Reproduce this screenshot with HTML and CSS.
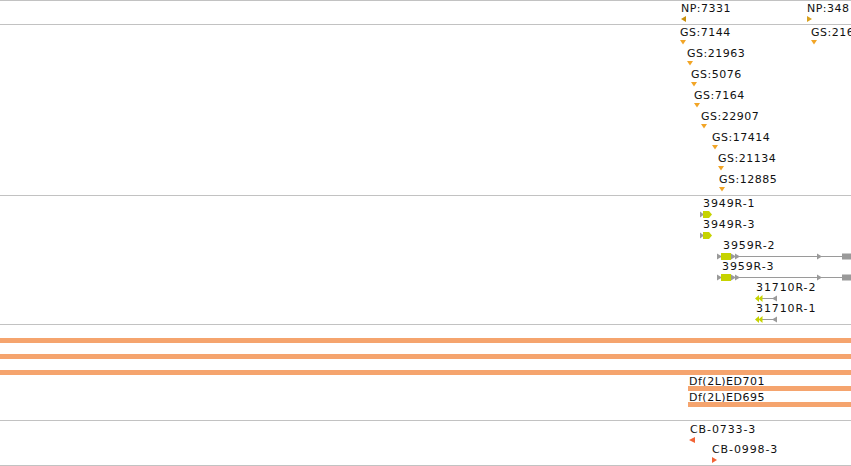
FILE: index.html
```html
<html lang="en">
  <head>
    <meta name="viewport" content="width=device-width, initial-scale=1" />
    <title>Tracks</title>
    <link rel="stylesheet" href="styles.css">
  </head>
  <body>
    <div class="panel">
      <!-- protein track -->
      <div class="track track-np">
        <div class="feat" style="left:681px;top:1px">
          <span class="lbl">NP:7331</span>
          <svg class="glyph" width="6" height="6"><polygon points="5,0 5,6 0,3" class="np-l" /></svg>
        </div>
        <div class="feat" style="left:807px;top:1px">
          <span class="lbl">NP:348</span>
          <svg class="glyph" width="6" height="6"><polygon points="0,0 0,6 5,3" class="np-r" /></svg>
        </div>
      </div>

      <!-- GS insertions -->
      <div class="track track-gs">
        <div class="feat" style="left:680px;top:1px">
          <span class="lbl">GS:7144</span>
          <svg class="glyph" width="6" height="5"><polygon points="0,0 6,0 3,4.5" class="gs" /></svg>
        </div>
        <div class="feat" style="left:687px;top:22px">
          <span class="lbl">GS:21963</span>
          <svg class="glyph" width="6" height="5"><polygon points="0,0 6,0 3,4.5" class="gs" /></svg>
        </div>
        <div class="feat" style="left:691px;top:43px">
          <span class="lbl">GS:5076</span>
          <svg class="glyph" width="6" height="5"><polygon points="0,0 6,0 3,4.5" class="gs" /></svg>
        </div>
        <div class="feat" style="left:694px;top:64px">
          <span class="lbl">GS:7164</span>
          <svg class="glyph" width="6" height="5"><polygon points="0,0 6,0 3,4.5" class="gs" /></svg>
        </div>
        <div class="feat" style="left:701px;top:85px">
          <span class="lbl">GS:22907</span>
          <svg class="glyph" width="6" height="5"><polygon points="0,0 6,0 3,4.5" class="gs" /></svg>
        </div>
        <div class="feat" style="left:712px;top:106px">
          <span class="lbl">GS:17414</span>
          <svg class="glyph" width="6" height="5"><polygon points="0,0 6,0 3,4.5" class="gs" /></svg>
        </div>
        <div class="feat" style="left:718px;top:127px">
          <span class="lbl">GS:21134</span>
          <svg class="glyph" width="6" height="5"><polygon points="0,0 6,0 3,4.5" class="gs" /></svg>
        </div>
        <div class="feat" style="left:719px;top:148px">
          <span class="lbl">GS:12885</span>
          <svg class="glyph" width="6" height="5"><polygon points="0,0 6,0 3,4.5" class="gs" /></svg>
        </div>
        <div class="feat" style="left:811px;top:1px">
          <span class="lbl">GS:21634</span>
          <svg class="glyph" width="6" height="5"><polygon points="0,0 6,0 3,4.5" class="gs" /></svg>
        </div>
      </div>

      <!-- gene models -->
      <div class="track track-genes">
        <div class="feat" style="left:700px;top:1px">
          <span class="lbl lbl-wide" style="margin-left:3px">3949R-1</span>
          <svg class="glyph" width="14" height="7">
            <polygon points="0,0.5 4,3.5 0,6.5" class="utr" />
            <polygon points="3,0 9,0 12,3.5 9,7 3,7" class="cds" />
          </svg>
        </div>
        <div class="feat" style="left:700px;top:22px">
          <span class="lbl lbl-wide" style="margin-left:3px">3949R-3</span>
          <svg class="glyph" width="14" height="7">
            <polygon points="0,0.5 4,3.5 0,6.5" class="utr" />
            <polygon points="3,0 9,0 12,3.5 9,7 3,7" class="cds" />
          </svg>
        </div>
        <div class="feat" style="left:717px;top:43px">
          <span class="lbl lbl-wide" style="margin-left:6px">3959R-2</span>
          <svg class="glyph" width="140" height="7">
            <line x1="22" y1="3.5" x2="130" y2="3.5" class="intron" />
            <polygon points="0,0.5 5,3.5 0,6.5" class="utr" />
            <rect x="4" y="0" width="10" height="7" class="cds" />
            <polygon points="14,0.5 19,3.5 14,6.5" class="utr" />
            <polygon points="18,0.5 23,3.5 18,6.5" class="utr" />
            <polygon points="100,0.5 105,3.5 100,6.5" class="utr" />
            <rect x="125" y="0.5" width="15" height="6" class="utr" />
          </svg>
        </div>
        <div class="feat" style="left:717px;top:64px">
          <span class="lbl lbl-wide" style="margin-left:5px">3959R-3</span>
          <svg class="glyph" width="140" height="7">
            <line x1="22" y1="3.5" x2="130" y2="3.5" class="intron" />
            <polygon points="0,0.5 5,3.5 0,6.5" class="utr" />
            <rect x="4" y="0" width="10" height="7" class="cds" />
            <polygon points="14,0.5 19,3.5 14,6.5" class="utr" />
            <polygon points="18,0.5 23,3.5 18,6.5" class="utr" />
            <polygon points="100,0.5 105,3.5 100,6.5" class="utr" />
            <rect x="125" y="0.5" width="15" height="6" class="utr" />
          </svg>
        </div>
        <div class="feat" style="left:755px;top:85px">
          <span class="lbl lbl-wide" style="margin-left:1px">31710R-2</span>
          <svg class="glyph" width="23" height="7">
            <line x1="6" y1="3.5" x2="18" y2="3.5" class="intron" />
            <polygon points="4,0 4,7 0,3.5" class="cds" />
            <polygon points="7.5,0 7.5,7 3.5,3.5" class="cds" />
            <polygon points="22,0.5 22,6.5 17,3.5" class="utr" />
          </svg>
        </div>
        <div class="feat" style="left:755px;top:106px">
          <span class="lbl lbl-wide" style="margin-left:1px">31710R-1</span>
          <svg class="glyph" width="23" height="7">
            <line x1="6" y1="3.5" x2="18" y2="3.5" class="intron" />
            <polygon points="4,0 4,7 0,3.5" class="cds" />
            <polygon points="7.5,0 7.5,7 3.5,3.5" class="cds" />
            <polygon points="22,0.5 22,6.5 17,3.5" class="utr" />
          </svg>
        </div>
      </div>

      <!-- deficiencies -->
      <div class="track track-df">
        <div class="span-bar" style="top:13px"></div>
        <div class="span-bar" style="top:29px"></div>
        <div class="span-bar" style="top:45px"></div>
        <div class="feat feat-wide" style="left:688px;top:50px">
          <span class="lbl" style="margin-left:1px">Df(2L)ED701</span>
          <div class="bar"></div>
        </div>
        <div class="feat feat-wide" style="left:688px;top:66px">
          <span class="lbl" style="margin-left:1px">Df(2L)ED695</span>
          <div class="bar"></div>
        </div>
      </div>

      <!-- CB insertions -->
      <div class="track track-cb">
        <div class="feat" style="left:689px;top:2px">
          <span class="lbl lbl-wide" style="margin-left:1px">CB-0733-3</span>
          <svg class="glyph" width="6" height="6"><polygon points="6,0 6,6 0,3" class="cb" /></svg>
        </div>
        <div class="feat" style="left:712px;top:22px">
          <span class="lbl lbl-wide">CB-0998-3</span>
          <svg class="glyph" width="6" height="6"><polygon points="0,0 0,6 5,3" class="cb" /></svg>
        </div>
      </div>
    </div>
  </body>
</html>
```

FILE: styles.css
```css
html,
body {
  margin: 0;
  padding: 0;
  background: #fff;
}
body {
  width: 851px;
  height: 466px;
  overflow: hidden;
  font-family: "DejaVu Sans", "Liberation Sans", sans-serif;
  font-size: 11px;
  color: #111;
}
.panel {
  border-top: 1px solid #c2c2c2;
}
.track {
  position: relative;
  overflow: hidden;
  border-bottom: 1px solid #c2c2c2;
}
.track-np {
  height: 23px;
}
.track-gs {
  height: 170px;
}
.track-genes {
  height: 128px;
}
.track-df {
  height: 95px;
}
.track-cb {
  height: 44px;
}

/* features sit at their genome coordinate */
.feat {
  position: absolute;
  display: flex;
  flex-direction: column;
  align-items: flex-start;
}
.feat-wide {
  right: 0;
  align-items: stretch;
}
.lbl {
  line-height: 13px;
  letter-spacing: 0.5px;
  white-space: nowrap;
}
.lbl-wide {
  letter-spacing: 0.9px;
}
.glyph {
  display: block;
  margin-top: 1px;
  overflow: visible;
}

.np-l {
  fill: #c88f0c;
}
.np-r {
  fill: #d9a11c;
}
.gs {
  fill: #f2a526;
}
.utr {
  fill: #9a9a9a;
}
.cds {
  fill: #c6d300;
}
.intron {
  stroke: #9a9a9a;
  stroke-width: 1;
}
.cb {
  fill: #f26436;
}

.span-bar {
  position: absolute;
  left: 0;
  right: 0;
  height: 5px;
  background: #f5a46e;
}
.bar {
  height: 5px;
  margin-top: -2px;
  background: #f5a46e;
}
```
